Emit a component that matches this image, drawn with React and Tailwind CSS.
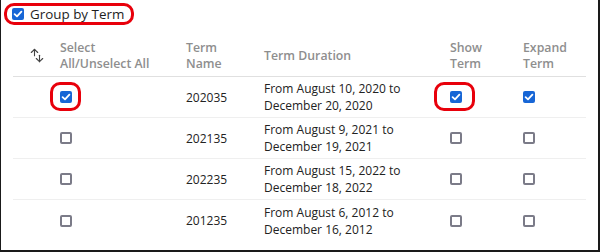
import { ArrowDown, ArrowUp } from 'lucide-react';

const terms = [
  { name: '202035', from: 'From August 10, 2020 to', to: 'December 20, 2020', selected: true, show: true, expand: true },
  { name: '202135', from: 'From August 9, 2021 to', to: 'December 19, 2021' },
  { name: '202235', from: 'From August 15, 2022 to', to: 'December 18, 2022' },
  { name: '201235', from: 'From August 6, 2012 to', to: 'December 16, 2012' },
];

function Box({ checked }) {
  if (!checked) {
    return <span className="block h-3 w-3 rounded-[2px] border-2 border-[#7b7b88] bg-white" />;
  }
  return (
    <span className="grid h-3 w-3 place-items-center rounded-[2px] bg-[#1766d6]">
      <svg viewBox="0 0 12 12" className="h-3 w-3">
        <path d="M2.6 6.2 5 8.4 9.4 3.6" fill="none" stroke="white" strokeWidth="1.8" strokeLinecap="round" strokeLinejoin="round" />
      </svg>
    </span>
  );
}

function Mark({ className }) {
  return <div className={`pointer-events-none absolute rounded-[10px] border-[3px] border-[#e8000b] ${className}`} />;
}

export default function App() {
  return (
    <div className="relative h-[252px] w-[600px] overflow-hidden border-b-2 border-l border-r-2 border-[#1a1a1a] bg-white font-['Open_Sans','Noto_Sans',sans-serif] text-[12px] text-[#222]">
      <div className="flex h-[36px] items-center gap-[6px] pl-[11px] pb-[8px] text-[13.4px] text-[#1e1e1e]">
        <Box checked />
        <span>Group by Term</span>
      </div>

      <div className="mx-[12px]">
        <div className="grid h-[41px] grid-cols-[47px_126px_78px_186px_73px_1fr] items-center border-b border-[#e0e0e0] text-[12.3px] font-semibold leading-[16px] text-[#8e8e8e]">
          <div className="flex justify-center pt-[2px] text-[#444]">
            <ArrowUp size={11} strokeWidth={2.4} className="-mr-[3px] -mt-[3px]" />
            <ArrowDown size={11} strokeWidth={2.4} className="-ml-[3px] mt-[3px]" />
          </div>
          <div>Select<br />All/Unselect All</div>
          <div>Term<br />Name</div>
          <div>Term Duration</div>
          <div>Show<br />Term</div>
          <div>Expand<br />Term</div>
        </div>

        {terms.map((t) => (
          <div key={t.name} className="grid h-[41px] grid-cols-[47px_126px_78px_186px_73px_1fr] items-center border-b border-[#efefef] leading-[17px] last:border-b-0">
            <div />
            <div><Box checked={t.selected} /></div>
            <div>{t.name}</div>
            <div>{t.from}<br />{t.to}</div>
            <div><Box checked={t.show} /></div>
            <div><Box checked={t.expand} /></div>
          </div>
        ))}
      </div>

      <Mark className="left-[3px] top-[3px] h-[22px] w-[130px]" />
      <Mark className="left-[49px] top-[82px] h-[29px] w-[31px]" />
      <Mark className="left-[433px] top-[82px] h-[29px] w-[41px]" />
    </div>
  );
}
